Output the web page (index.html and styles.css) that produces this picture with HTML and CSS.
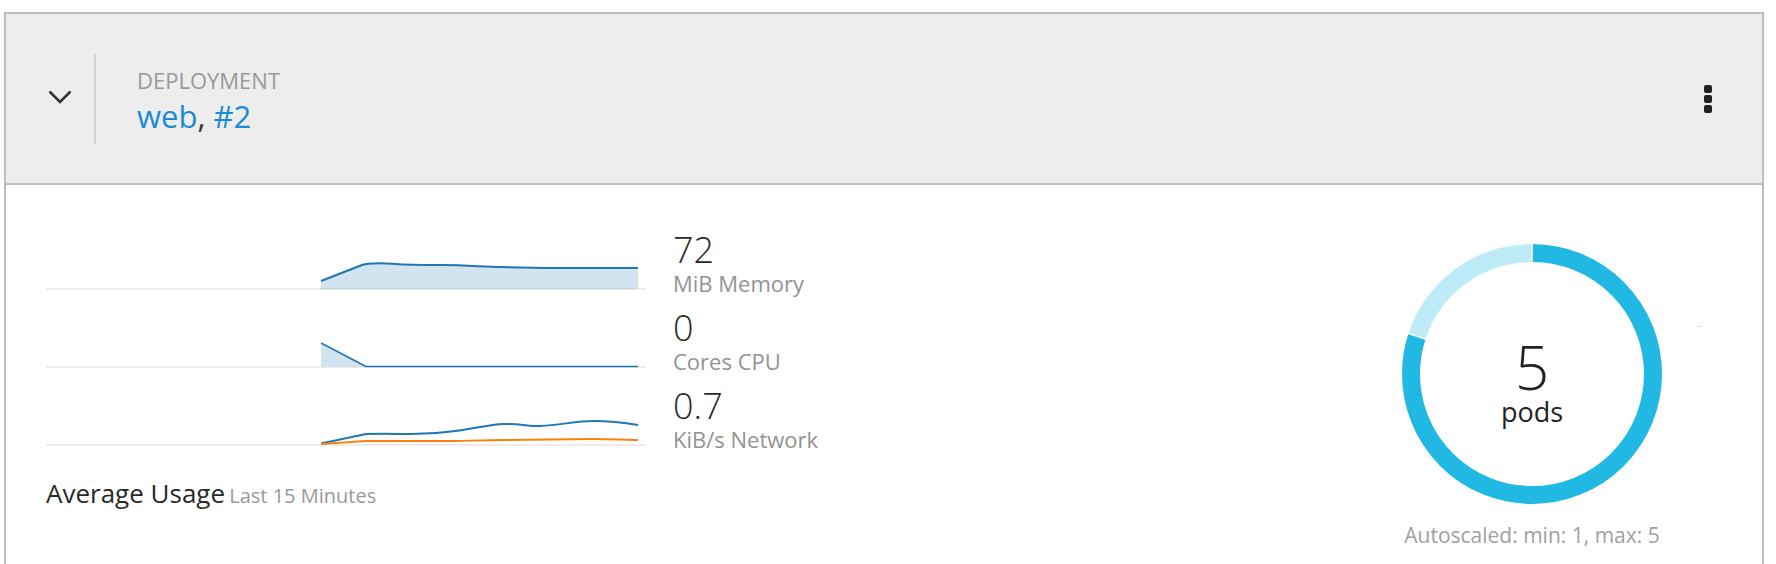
FILE: index.html
```html
<!DOCTYPE html>
<html>
<head>
<meta charset="utf-8">
<link rel="stylesheet" href="styles.css">
</head>
<body>
<div class="card">
  <div class="card-header">
    <svg class="chevron" width="24" height="14" viewBox="0 0 24 14"><polyline points="1.5,1.5 12,12 22.5,1.5" fill="none" stroke="#333" stroke-width="2.6"/></svg>
    <div class="divider"></div>
    <div class="title-block">
      <div class="kind">DEPLOYMENT</div>
      <div class="name"><a class="link">web</a>, <a class="link">#2</a></div>
    </div>
    <div class="kebab"><span></span><span></span><span></span></div>
  </div>
  <div class="card-body">
    <div class="metrics">
      <div class="metric-row">
        <svg class="spark" width="600" height="66" viewBox="0 0 600 66">
          <rect x="0" y="58" width="600" height="2" fill="#ececec"/>
          <path d="M275,51 L316,35 C322,33 335,33 350,34 C360,35 375,35 397,35 C420,35 440,37 454,37 L499,38 L592,38 L592,59 L275,59 Z" fill="#1f77b4" fill-opacity="0.2"/>
          <path d="M275,51 L316,35 C322,33 335,33 350,34 C360,35 375,35 397,35 C420,35 440,37 454,37 L499,38 L592,38" fill="none" stroke="#1f77b4" stroke-width="2" stroke-linejoin="round"/>
        </svg>
        <div class="metric-text">
          <div class="value">72</div>
          <div class="unit">MiB Memory</div>
        </div>
      </div>
      <div class="metric-row">
        <svg class="spark" width="600" height="66" viewBox="0 0 600 66">
          <rect x="0" y="58" width="600" height="2" fill="#ececec"/>
          <path d="M275,35 L320,58.5 L275,58.5 Z" fill="#1f77b4" fill-opacity="0.2"/>
          <path d="M275,35 L320,58.5 L592,58.5" fill="none" stroke="#1f77b4" stroke-width="1.6" stroke-linejoin="round"/>
        </svg>
        <div class="metric-text">
          <div class="value">0</div>
          <div class="unit">Cores CPU</div>
        </div>
      </div>
      <div class="metric-row">
        <svg class="spark" width="600" height="66" viewBox="0 0 600 66">
          <rect x="0" y="58" width="600" height="2" fill="#ececec"/>
          <path d="M275,57.5 L320,48 C340,47.5 350,48 365,48 C385,47.5 395,47 409,45 C430,42 445,38.5 458,38 C475,38 482,40 494,40 C515,39 530,35 548,35 C565,35 580,37 592,39" fill="none" stroke="#1f77b4" stroke-width="2" stroke-linejoin="round"/>
          <path d="M275,58 L320,55 L409,55 C430,54.5 445,54 458,54 L548,53 C565,53 580,54 592,54" fill="none" stroke="#ff7f0e" stroke-width="2" stroke-linejoin="round"/>
        </svg>
        <div class="metric-text">
          <div class="value">0.7</div>
          <div class="unit">KiB/s Network</div>
        </div>
      </div>
      <div class="usage"><span class="usage-title">Average Usage</span> <span class="usage-sub">Last 15 Minutes</span></div>
    </div>
    <div class="pods">
      <svg class="donut" width="260" height="260" viewBox="0 0 260 260">
        <g transform="rotate(-90 130 130)">
          <circle cx="130" cy="130" r="121" fill="none" stroke="#bdebf7" stroke-width="18" stroke-dasharray="150.3 610" stroke-dashoffset="-609"/>
          <circle cx="130" cy="130" r="121" fill="none" stroke="#21b9e3" stroke-width="18" stroke-dasharray="606.7 153.6" stroke-dashoffset="-0.8"/>
        </g>
        <text x="130" y="146" text-anchor="middle" class="pods-count">5</text>
        <text x="130" y="178" text-anchor="middle" class="pods-label">pods</text>
      </svg>
      <span class="stray"></span>
      <div class="autoscale">Autoscaled: min: 1, max: 5</div>
    </div>
  </div>
</div>
</body>
</html>
```
FILE: styles.css
```css
html, body {
  margin: 0;
  padding: 0;
  background: #fff;
  font-family: "Open Sans", "Liberation Sans", sans-serif;
}

.card {
  margin: 12px 12px 0 4px;
  border: 2px solid #bdbdbd;
  border-bottom: none;
  height: 600px;
}

.card-header {
  display: flex;
  align-items: center;
  height: 169px;
  background: #ededed;
  border-bottom: 2px solid #bdbdbd;
  padding: 0 50px 0 42px;
}

.chevron {
  display: block;
  margin-top: -3px;
}

.divider {
  width: 2px;
  height: 90px;
  background: #d3d3d3;
  margin-left: 22px;
  margin-right: 41px;
}

.title-block {
  display: flex;
  flex-direction: column;
  padding-top: 3px;
}

.kind {
  font-size: 22px;
  line-height: 26px;
  color: #999;
}

.name {
  font-size: 31px;
  line-height: 36px;
  margin-top: 5px;
  color: #333;
}

.link {
  color: #1a8ad4;
}

.kebab {
  margin-left: auto;
  display: flex;
  flex-direction: column;
  gap: 2px;
}

.kebab span {
  display: block;
  width: 8px;
  height: 8px;
  border-radius: 2px;
  background: #222;
}

.card-body {
  display: flex;
  padding: 45px 0 0 40px;
}

.metrics {
  display: flex;
  flex-direction: column;
  gap: 12px;
}

.metric-row {
  display: flex;
  align-items: flex-start;
}

.spark {
  display: block;
  flex: none;
}

.metric-text {
  margin-left: 27px;
}

.value {
  font-size: 36px;
  line-height: 40px;
  font-weight: 300;
  color: #292929;
}

.unit {
  font-size: 22px;
  line-height: 26px;
  color: #939393;
}

.usage {
  margin-top: 14px;
  line-height: 30px;
}

.usage-title {
  font-size: 26px;
  color: #292929;
}

.usage-sub {
  font-size: 20px;
  color: #999;
}

.pods {
  position: relative;
  margin-left: auto;
  margin-right: 100px;
  margin-top: 14px;
  width: 260px;
  display: flex;
  flex-direction: column;
  align-items: center;
}

.donut {
  display: block;
}

.pods-count {
  font-family: "Open Sans", "Liberation Sans", sans-serif;
  font-size: 60px;
  font-weight: 300;
  fill: #222;
}

.pods-label {
  font-family: "Open Sans", "Liberation Sans", sans-serif;
  font-size: 27px;
  fill: #222;
}

.stray {
  position: absolute;
  left: 295px;
  top: 82px;
  width: 4px;
  height: 1px;
  background: #d8d8d8;
}

.autoscale {
  margin-top: 19px;
  font-size: 21px;
  line-height: 24px;
  color: #a0a0a0;
  white-space: nowrap;
}
```
